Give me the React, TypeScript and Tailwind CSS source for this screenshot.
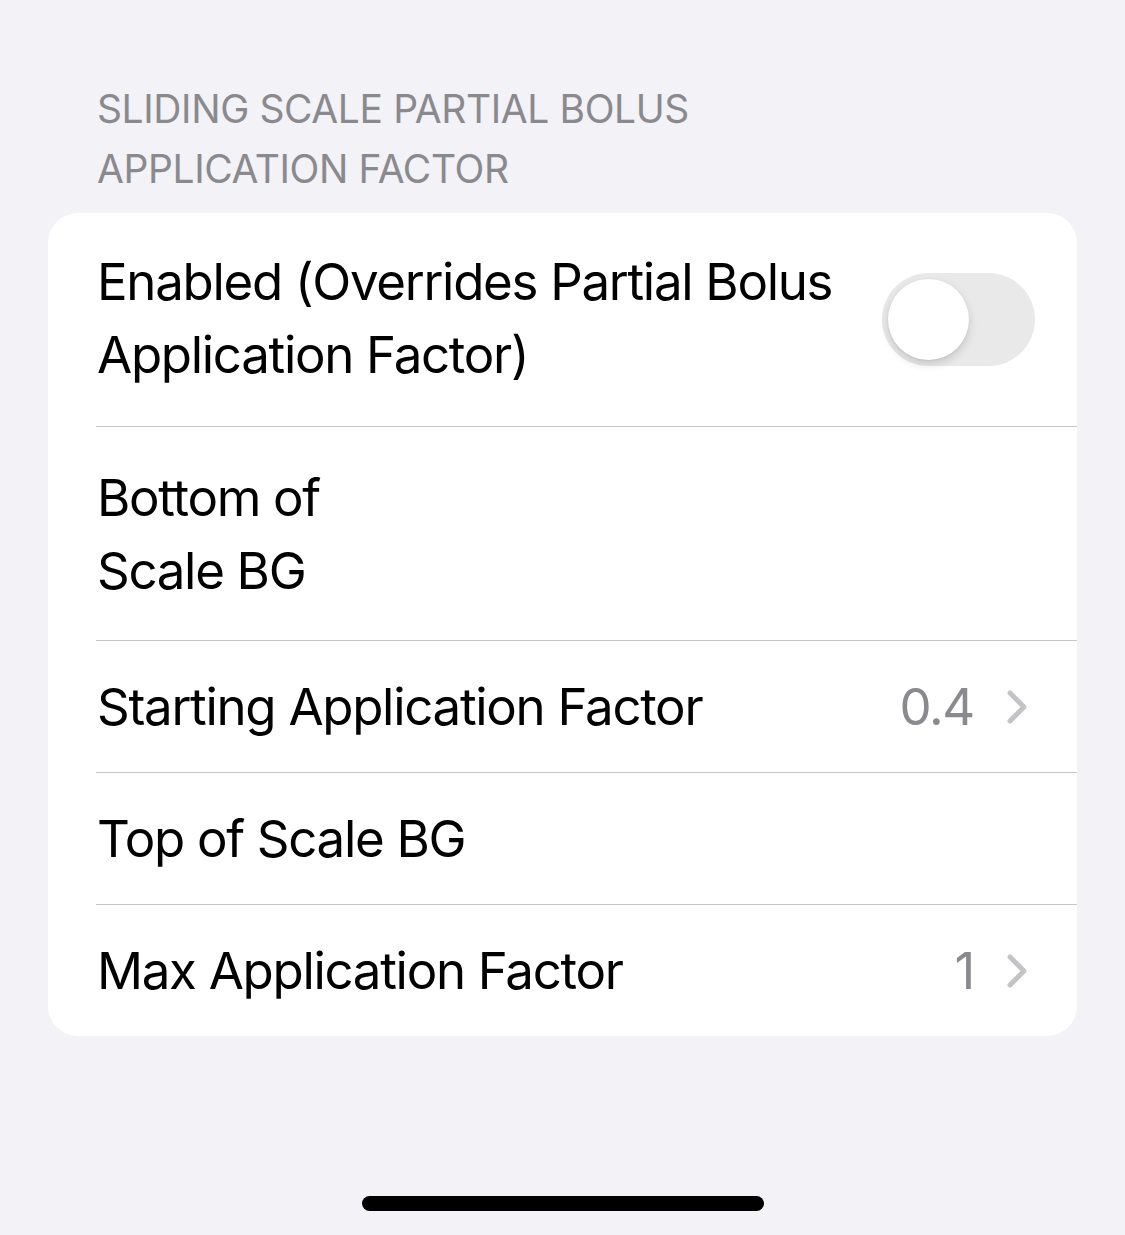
import { useState } from 'react';

const font = { fontFamily: 'Inter, "Liberation Sans", sans-serif' };

const Chevron = () => (
  <svg width="22" height="36" viewBox="0 0 22 36" fill="none" className="ml-[32px]">
    <path d="M4 4 L18 18 L4 32" stroke="#c4c4c7" strokeWidth="5" strokeLinecap="round" strokeLinejoin="round" />
  </svg>
);

const Toggle = ({ on, onChange }: { on: boolean; onChange: () => void }) => (
  <button
    type="button"
    onClick={onChange}
    className={`relative w-[153px] h-[93px] rounded-full shrink-0 transition-colors ${on ? 'bg-[#34c759]' : 'bg-[#e9e9ea]'}`}
  >
    <span
      className={`absolute top-[6px] w-[81px] h-[81px] rounded-full bg-white shadow-[0_4px_10px_rgba(0,0,0,0.15),0_1px_2px_rgba(0,0,0,0.06)] transition-all ${on ? 'left-[66px]' : 'left-[6px]'}`}
    />
  </button>
);

const Separator = () => <div className="ml-[48px] h-px bg-[#c6c6c8]" />;

export default function App() {
  const [enabled, setEnabled] = useState(false);

  return (
    <div className="w-[1125px] h-[1235px] bg-[#f2f2f7] flex flex-col" style={font}>
      <div className="pt-[79px] px-[97px] pb-[14px] text-[39px] leading-[60px] text-[#8a8a8e] tracking-[-0.4px]">
        <div>SLIDING SCALE PARTIAL BOLUS</div>
        <div>APPLICATION FACTOR</div>
      </div>

      <div className="mx-[48px] bg-white rounded-[30px] overflow-hidden text-black text-[51px] leading-[73px] tracking-[-1.3px]">
        <div className="h-[213px] flex items-center justify-between pl-[49px] pr-[42px]">
          <div className="-mt-[4px]">
            <div>Enabled (Overrides Partial Bolus</div>
            <div>Application Factor)</div>
          </div>
          <Toggle on={enabled} onChange={() => setEnabled(!enabled)} />
        </div>
        <Separator />
        <div className="h-[213px] flex items-center pl-[49px] pr-[49px]">
          <div>
            <div>Bottom of</div>
            <div>Scale BG</div>
          </div>
        </div>
        <Separator />
        <div className="h-[131px] flex items-center justify-between pl-[49px] pr-[49px]">
          <span>Starting Application Factor</span>
          <div className="flex items-center">
            <span className="text-[#8a8a8e]">0.4</span>
            <Chevron />
          </div>
        </div>
        <Separator />
        <div className="h-[131px] flex items-center pl-[49px] pr-[49px]">
          <span>Top of Scale BG</span>
        </div>
        <Separator />
        <div className="h-[131px] flex items-center justify-between pl-[49px] pr-[49px]">
          <span>Max Application Factor</span>
          <div className="flex items-center">
            <span className="text-[#8a8a8e]">1</span>
            <Chevron />
          </div>
        </div>
      </div>

      <div className="flex-1" />
      <div className="flex justify-center pb-[24px]">
        <div className="w-[402px] h-[15px] rounded-full bg-black" />
      </div>
    </div>
  );
}
